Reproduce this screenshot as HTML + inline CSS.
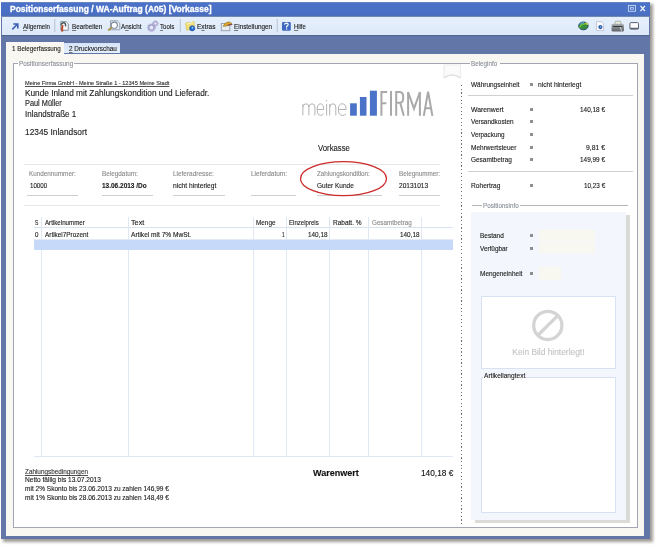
<!DOCTYPE html>
<html><head><meta charset="utf-8"><style>
html,body{margin:0;padding:0;}
body{width:658px;height:548px;position:relative;overflow:hidden;background:#fff;font-family:"Liberation Sans",sans-serif;}
.a{position:absolute;}
.t{position:absolute;white-space:nowrap;line-height:1;transform-origin:0 50%;-webkit-text-stroke:0.12px currentColor;font-family:"Liberation Sans",sans-serif;}
.hl{position:absolute;height:1px;}
u{text-decoration-color:#7a7a7a;}
.vl{position:absolute;width:1px;}
</style></head><body><div id="w" style="position:absolute;left:0;top:0;width:658px;height:548px;filter:blur(0.3px)">
<!-- shadow -->
<div class="a" style="left:3px;top:4px;width:650px;height:538px;background:rgba(80,72,64,.55);filter:blur(1.6px)"></div>
<!-- window base -->
<div class="a" style="left:1px;top:2px;width:649px;height:537px;background:#6277a8"></div>
<!-- title bar -->
<div class="a" style="left:1px;top:1.5px;width:649px;height:14.5px;background:linear-gradient(#7d90bc 0,#4a72c8 1.2px,#4a70c4 11px,#4b6cb8 100%)"></div>
<!-- toolbar -->
<div class="a" style="left:1px;top:16px;width:649px;height:1px;background:#7088b8"></div>
<div class="a" style="left:2px;top:17px;width:647px;height:18px;background:linear-gradient(#e6f0fc,#dde9f9)"></div>
<div class="a" style="left:1px;top:35px;width:649px;height:1px;background:#51648f"></div>
<!-- panel -->
<div class="a" style="left:6px;top:54px;width:638px;height:482px;background:#f8f7f1"></div>
<!-- tabs -->
<div class="a" style="left:6px;top:42px;width:58px;height:12px;background:#f8f7f1"></div>
<div class="a" style="left:64px;top:43px;width:56px;height:10px;background:linear-gradient(#d6e4f8,#e4eefb)"></div>
<!-- frame -->
<div class="a" style="left:13px;top:63px;width:623px;height:463px;border:1px solid #a2a6b2;background:#fff"></div>
<!-- gaps for labels -->
<div class="a" style="left:18px;top:62px;width:56px;height:3px;background:linear-gradient(#f8f7f1 50%,#fff 50%)"></div>
<div class="a" style="left:469.5px;top:62px;width:30px;height:3px;background:linear-gradient(#f8f7f1 50%,#fff 50%)"></div>
<!-- dotted separator -->
<div class="a" style="left:461px;top:85px;width:1px;height:442px;background:repeating-linear-gradient(#707070 0,#707070 1.2px,transparent 1.2px,transparent 3.65px)"></div>
<!-- field lines -->
<div class="hl" style="left:24px;top:164px;width:416px;background:#e6e6e6"></div>
<div class="hl" style="left:24px;top:205px;width:416px;background:#e6e6e6"></div>
<div class="hl" style="left:26.7px;top:194.7px;width:51.8px;background:#cfcfcf"></div>
<div class="hl" style="left:101.8px;top:194.7px;width:51.7px;background:#cfcfcf"></div>
<div class="hl" style="left:173.3px;top:194.7px;width:51.9px;background:#cfcfcf"></div>
<div class="hl" style="left:250.7px;top:194.7px;width:45.5px;background:#cfcfcf"></div>
<div class="hl" style="left:316.9px;top:194.7px;width:65.2px;background:#cfcfcf"></div>
<div class="hl" style="left:398.9px;top:194.7px;width:41.1px;background:#cfcfcf"></div>
<!-- table -->
<div class="hl" style="left:34px;top:227px;width:418.6px;background:#d8e2f2"></div>
<div class="hl" style="left:34px;top:239px;width:418.6px;background:#e4ebf6"></div>
<div class="hl" style="left:34px;top:456px;width:418.6px;background:#dfe6f4"></div>
<div class="vl" style="left:41px;top:217px;height:239px;background:#dfe6f4"></div>
<div class="vl" style="left:128px;top:217px;height:239px;background:#dfe6f4"></div>
<div class="vl" style="left:252.5px;top:217px;height:239px;background:#dfe6f4"></div>
<div class="vl" style="left:286px;top:217px;height:239px;background:#dfe6f4"></div>
<div class="vl" style="left:329px;top:217px;height:239px;background:#dfe6f4"></div>
<div class="vl" style="left:368px;top:217px;height:239px;background:#dfe6f4"></div>
<div class="vl" style="left:420.5px;top:217px;height:239px;background:#dfe6f4"></div>
<div class="a" style="left:34px;top:240px;width:418.6px;height:10.4px;background:#c6d9f8"></div>
<!-- ellipse -->
<svg class="a" style="left:0;top:0" width="658" height="548"><ellipse cx="343.5" cy="178.7" rx="43" ry="17" fill="none" stroke="#cc2a2a" stroke-width="1.3"/></svg>
<!-- beleginfo lines -->
<div class="hl" style="left:468px;top:95px;width:165px;background:#d0d0d0"></div>
<div class="hl" style="left:468px;top:171px;width:165px;background:#d0d0d0"></div>
<!-- positionsinfo -->
<div class="hl" style="left:472px;top:205px;width:10px;background:#b4b4b0"></div>
<div class="hl" style="left:519.5px;top:205px;width:108px;background:#b4b4b0"></div>
<div class="a" style="left:471px;top:212px;width:155px;height:308px;background:#f3f6fc;box-shadow:4px 3px 0 #dadad6"></div>
<div class="a" style="left:539px;top:229.5px;width:56px;height:11px;background:#f9f8f0"></div>
<div class="a" style="left:539px;top:241.5px;width:56px;height:11px;background:#f9f8f0"></div>
<div class="a" style="left:539px;top:267px;width:22px;height:13px;background:#f9f8f0"></div>
<div class="a" style="left:481px;top:295.5px;width:132.5px;height:71.5px;border:1px solid #d9e2f3;background:#fff"></div>
<svg class="a" style="left:0;top:0" width="658" height="548"><circle cx="547.8" cy="325.4" r="14.1" fill="none" stroke="#d4d4d4" stroke-width="3.3"/><line x1="557.9" y1="315.3" x2="537.7" y2="335.5" stroke="#d4d4d4" stroke-width="3.3"/></svg>
<div class="a" style="left:481px;top:377px;width:132.5px;height:134px;border:1px solid #d9e2f3;background:#fff"></div>
<!-- logo -->
<svg class="a" style="left:0;top:0" width="658" height="548">
<g fill="none" stroke="#b3b3b3" stroke-width="1">
<path d="M302.9,115.4 V104 M302.9,107 Q303.5,103.8 306,103.8 Q308.9,103.8 308.9,107 V115.4 M308.9,107 Q309.5,103.8 312,103.8 Q314.9,103.8 314.9,107 V115.4"/>
<path d="M317.2,109.5 H323.7 Q323.7,103.8 320.4,103.8 Q317.2,103.8 317.2,109.6 Q317.2,115.4 320.6,115.4 Q322.7,115.4 323.7,113.6"/>
<path d="M326.6,104 V115.4 M326.6,100 V101.3"/>
<path d="M329.7,115.4 V104 M329.7,107 Q330.4,103.8 332.9,103.8 Q335.8,103.8 335.8,107 V115.4"/>
<path d="M338.4,109.5 H346.1 Q346.1,103.8 342.2,103.8 Q338.4,103.8 338.4,109.6 Q338.4,115.4 342.4,115.4 Q344.9,115.4 346.1,113.6"/>
</g>
<rect x="350.1" y="103.3" width="6.7" height="12.4" fill="#4a72c8"/>
<rect x="359.9" y="97" width="6.6" height="18.7" fill="#4a72c8"/>
<rect x="369.9" y="90.7" width="7" height="25" fill="#4a72c8"/>
<g fill="none" stroke="#a9a9a9" stroke-width="2">
<path d="M381.4,115.8 V92.1 H387.2 M381.4,103.3 H386.3"/>
<path d="M391,91.1 V115.8"/>
<path d="M396.2,115.8 V92.1 H399.8 Q403.2,92.1 403.2,97.4 Q403.2,102.8 399.8,102.8 H396.2 M400.2,102.8 L403.8,115.8"/>
<path d="M408.1,115.8 V92 L414,108.7 L419.9,92 V115.8"/>
<path d="M423.8,115.8 L428.1,91.6 L432.4,115.8 M425.1,108.2 H431.1"/>
</g>
</svg>
<!-- equal signs -->
<div class="a" style="left:530px;top:83px;width:3px;height:3px;background:#8e8e8e"></div>
<div class="a" style="left:530px;top:108px;width:3px;height:3px;background:#8e8e8e"></div>
<div class="a" style="left:530px;top:120px;width:3px;height:3px;background:#8e8e8e"></div>
<div class="a" style="left:530px;top:133px;width:3px;height:3px;background:#8e8e8e"></div>
<div class="a" style="left:530px;top:146px;width:3px;height:3px;background:#8e8e8e"></div>
<div class="a" style="left:530px;top:158px;width:3px;height:3px;background:#8e8e8e"></div>
<div class="a" style="left:530px;top:184px;width:3px;height:3px;background:#8e8e8e"></div>
<div class="a" style="left:530px;top:234px;width:3px;height:3px;background:#8e8e8e"></div>
<div class="a" style="left:530px;top:247px;width:3px;height:3px;background:#8e8e8e"></div>
<div class="a" style="left:530px;top:272px;width:3px;height:3px;background:#8e8e8e"></div>
<!-- page curl -->
<svg class="a" style="left:0;top:0" width="658" height="548">
<path d="M444,65 H460.5 V78 Q452,72 444,78 Z" fill="#fbfbfb" stroke="#ededed" stroke-width="1.2"/><path d="M444.5,77.5 Q452,72.5 460,77.5" fill="none" stroke="#e2e2e2" stroke-width="1.6"/>
</svg>
<!-- toolbar icons -->
<svg class="a" style="left:0;top:0" width="658" height="548">
<!-- separators -->
<rect x="54.3" y="19" width="1" height="13" fill="#b8c0cc"/>
<rect x="179.8" y="19" width="1" height="13" fill="#b8c0cc"/>
<rect x="276.7" y="19" width="1" height="13" fill="#b8c0cc"/>
<!-- allgemein arrow -->
<path d="M12.3,29.4 L17.4,24.3 M13.3,24 H17.8 V28.5" fill="none" stroke="#3a5fb4" stroke-width="1.6"/>
<!-- bearbeiten -->
<path d="M60.8,21.6 H66 L68.3,23.8 V30.3 H60.8 Z" fill="#f4f6fa" stroke="#7d8898" stroke-width="0.9"/>
<path d="M62.3,31.6 Q61.9,27 62.6,25" fill="none" stroke="#b84a2a" stroke-width="2"/>
<path d="M60.8,24.8 Q62,22.6 64,22.8 Q65.8,23.2 65.6,26.4" fill="none" stroke="#4a5c5c" stroke-width="1.4"/>
<!-- ansicht -->
<path d="M110.5,20.8 H117.2 L119.8,23.3 V29.8 H110.5 Z" fill="#e8ecf4" stroke="#8f9aac" stroke-width="0.9"/>
<circle cx="114.3" cy="25.2" r="3.1" fill="#ffffff" stroke="#7f8a9e" stroke-width="1.1"/>
<path d="M108.2,30.5 L111.8,27.3" stroke="#a89850" stroke-width="2"/>
<!-- tools -->
<circle cx="151.4" cy="27.6" r="3.6" fill="none" stroke="#9c96c4" stroke-width="1.2" stroke-dasharray="1.2 0.9"/>
<circle cx="151.4" cy="27.6" r="2.6" fill="none" stroke="#a8a2cc" stroke-width="1.4"/>
<circle cx="155.4" cy="23.5" r="2.7" fill="none" stroke="#9c96c4" stroke-width="1" stroke-dasharray="1 0.8"/>
<circle cx="155.4" cy="23.5" r="1.9" fill="#e4e0f2" stroke="#aaa4ce" stroke-width="1.1"/>
<!-- extras -->
<path d="M185.5,23.5 L188,22.3 L191,22.6 L194,21.3 L194.6,28.8 L186.6,30.2 Z" fill="#f0de78" stroke="#d8be50" stroke-width="0.6"/><path d="M187,24 L193,22.5" stroke="#fff8d0" stroke-width="1"/>
<circle cx="192.2" cy="28.3" r="2.6" fill="#2a6ccc" stroke="#1a4a9a" stroke-width="0.6"/>
<circle cx="192.5" cy="27.8" r="0.8" fill="#bfe8ff"/>
<!-- einstellungen -->
<rect x="221.3" y="23.5" width="8.5" height="7.2" fill="#e8ecf2" stroke="#9aa3b0" stroke-width="1"/>
<path d="M223,26.2 Q225,22 229,21.8 L232,23.5 Q228,25.5 226,26.2 Z" fill="#d8a830" stroke="#8a6a20" stroke-width="0.5"/>
<path d="M227.5,25.2 L232.3,24.5" stroke="#803040" stroke-width="1"/>
<!-- hilfe -->
<rect x="282" y="21.9" width="8.8" height="8.8" rx="1.3" fill="#3f6ac0"/>
<path d="M284.6,24.6 Q284.8,23.1 286.4,23.1 Q288.2,23.1 288.2,24.6 Q288.2,25.7 286.6,26.4 V27.6" fill="none" stroke="#fff" stroke-width="1.2"/>
<rect x="286" y="28.3" width="1.2" height="1.2" fill="#fff"/>
<!-- right icons -->
<ellipse cx="583.4" cy="25.9" rx="4.7" ry="3.9" fill="#3a8a40" stroke="#1e4a6a" stroke-width="1"/>
<path d="M579.5,27.5 Q582,23 587.5,24" fill="none" stroke="#6ac030" stroke-width="1.6"/>
<path d="M580,24.5 Q581.5,22.8 584,22.7" fill="none" stroke="#5aa0d0" stroke-width="1.2"/>
<path d="M585.3,23.3 Q587,23.3 587.8,24.6" fill="none" stroke="#e0d040" stroke-width="1.2"/>
<path d="M596.4,21.6 H601.8 L603.6,23.5 V30.6 H596.4 Z" fill="#fafbfd" stroke="#b0b4c8" stroke-width="0.7"/>
<circle cx="600.4" cy="27.1" r="2.1" fill="#2c5ea8"/>
<circle cx="600.7" cy="26.8" r="0.6" fill="#cfe6ff"/>
<path d="M614.5,24.2 L615.5,21.3 H620.5 L621.5,24.2 Z" fill="#e8f0e0" stroke="#8a8a8a" stroke-width="0.6"/>
<defs><linearGradient id="pg" x1="0" y1="0" x2="0" y2="1"><stop offset="0" stop-color="#a8acb0"/><stop offset="1" stop-color="#5e6266"/></linearGradient></defs><path d="M611.5,25 Q611.5,24 613,24 H622.5 Q624,24 624,25.5 V30 Q624,31.5 622.5,31.5 H613 Q611.5,31.5 611.5,30 Z" fill="url(#pg)"/>
<path d="M613,26.5 H622.5" stroke="#35383a" stroke-width="1"/>
<path d="M620.3,27 L621.5,31" stroke="#d8d8d8" stroke-width="0.9"/>
<rect x="629.9" y="22.6" width="8.6" height="6.5" rx="1" fill="#fbfbfc" stroke="#5d6270" stroke-width="1"/>
<path d="M630,28.4 H638.4" stroke="#5d6270" stroke-width="1.3"/>
<!-- window buttons -->
<rect x="628.4" y="5.5" width="7.1" height="5.8" fill="none" stroke="#c8d8f4" stroke-width="0.9"/>
<rect x="630.6" y="7.6" width="2.8" height="1.6" fill="none" stroke="#c8d8f4" stroke-width="0.8"/>
<path d="M640.5,5.8 L645,11.2 M645,5.8 L640.5,11.2" stroke="#f4f8ff" stroke-width="1.3"/>
</svg>
<div class="a" style="left:483px;top:375px;width:42px;height:3px;background:linear-gradient(#f3f6fc 1px,#fff 1px)"></div>
<div class="t" style="left:10.00px;top:5px;font-size:8.4px;font-weight:bold;color:#ffffff;transform:scaleX(1.0148);-webkit-text-stroke:0.3px #fff;">Positionserfassung / WA-Auftrag (A05) [Vorkasse]</div>
<div class="t" style="left:22.80px;top:24px;font-size:7.1px;font-weight:normal;color:#1a1a1a;transform:scaleX(0.8653);"><u>A</u>llgemein</div>
<div class="t" style="left:71.90px;top:24px;font-size:7.1px;font-weight:normal;color:#1a1a1a;transform:scaleX(0.8846);"><u>B</u>earbeiten</div>
<div class="t" style="left:121.40px;top:24px;font-size:7.1px;font-weight:normal;color:#1a1a1a;transform:scaleX(0.8759);">A<u>n</u>sicht</div>
<div class="t" style="left:160.20px;top:24px;font-size:7.1px;font-weight:normal;color:#1a1a1a;transform:scaleX(0.8641);"><u>T</u>ools</div>
<div class="t" style="left:197.00px;top:24px;font-size:7.1px;font-weight:normal;color:#1a1a1a;transform:scaleX(0.9194);">E<u>x</u>tras</div>
<div class="t" style="left:233.80px;top:24px;font-size:7.1px;font-weight:normal;color:#1a1a1a;transform:scaleX(0.8933);"><u>E</u>instellungen</div>
<div class="t" style="left:294.20px;top:24px;font-size:7.1px;font-weight:normal;color:#1a1a1a;transform:scaleX(0.8283);"><u>H</u>ilfe</div>
<div class="t" style="left:11.90px;top:46px;font-size:7.1px;font-weight:normal;color:#1a1a1a;transform:scaleX(0.8830);">1 Belegerfassung</div>
<div class="t" style="left:68.90px;top:46px;font-size:7.1px;font-weight:normal;color:#1a1a1a;transform:scaleX(0.8972);"><u>2</u> Druckvorschau</div>
<div class="t" style="left:18.80px;top:61px;font-size:7.1px;font-weight:normal;color:#8a8f98;transform:scaleX(0.9051);">Positionserfassung</div>
<div class="t" style="left:471.20px;top:61px;font-size:7.1px;font-weight:normal;color:#8a8f98;transform:scaleX(0.8875);">Beleginfo</div>
<div class="t" style="left:483.00px;top:203px;font-size:7.1px;font-weight:normal;color:#8a8f98;transform:scaleX(0.8864);">Positionsinfo</div>
<div class="t" style="left:25.00px;top:81px;font-size:5.3px;font-weight:normal;color:#333;transform:scaleX(1.0590);text-decoration:underline;text-decoration-color:#505050;">Meine Firma GmbH - Meine Straße 1 - 12345 Meine Stadt</div>
<div class="t" style="left:25.00px;top:89px;font-size:8.7px;font-weight:normal;color:#1a1a1a;transform:scaleX(0.9521);">Kunde Inland mit Zahlungskondition und Lieferadr.</div>
<div class="t" style="left:24.90px;top:99px;font-size:8.7px;font-weight:normal;color:#1a1a1a;transform:scaleX(0.8471);">Paul Müller</div>
<div class="t" style="left:24.90px;top:110px;font-size:8.7px;font-weight:normal;color:#1a1a1a;transform:scaleX(0.9209);">Inlandstraße 1</div>
<div class="t" style="left:24.90px;top:128px;font-size:8.7px;font-weight:normal;color:#1a1a1a;transform:scaleX(0.9585);">12345 Inlandsort</div>
<div class="t" style="left:318.20px;top:144px;font-size:9.0px;font-weight:normal;color:#1a1a1a;transform:scaleX(0.8618);">Vorkasse</div>
<div class="t" style="left:29.20px;top:171px;font-size:7.1px;font-weight:normal;color:#8a8a8a;transform:scaleX(0.8919);">Kundennummer:</div>
<div class="t" style="left:30.40px;top:183px;font-size:7.1px;font-weight:normal;color:#1a1a1a;transform:scaleX(0.8695);">10000</div>
<div class="t" style="left:101.80px;top:171px;font-size:7.1px;font-weight:normal;color:#8a8a8a;transform:scaleX(0.8982);">Belegdatum:</div>
<div class="t" style="left:101.80px;top:183px;font-size:7.1px;font-weight:bold;color:#1a1a1a;transform:scaleX(0.9139);">13.06.2013 /Do</div>
<div class="t" style="left:173.30px;top:171px;font-size:7.1px;font-weight:normal;color:#8a8a8a;transform:scaleX(0.9070);">Lieferadresse:</div>
<div class="t" style="left:173.30px;top:183px;font-size:7.1px;font-weight:normal;color:#1a1a1a;transform:scaleX(0.9401);">nicht hinterlegt</div>
<div class="t" style="left:250.70px;top:171px;font-size:7.1px;font-weight:normal;color:#8a8a8a;transform:scaleX(0.9148);">Lieferdatum:</div>
<div class="t" style="left:316.90px;top:171px;font-size:7.1px;font-weight:normal;color:#8a8a8a;transform:scaleX(0.8879);">Zahlungskondition:</div>
<div class="t" style="left:316.90px;top:183px;font-size:7.1px;font-weight:normal;color:#1a1a1a;transform:scaleX(0.9136);">Guter Kunde</div>
<div class="t" style="left:398.90px;top:171px;font-size:7.1px;font-weight:normal;color:#8a8a8a;transform:scaleX(0.8904);">Belegnummer:</div>
<div class="t" style="left:398.90px;top:183px;font-size:7.1px;font-weight:normal;color:#1a1a1a;transform:scaleX(0.9204);">20131013</div>
<div class="t" style="left:35.10px;top:220px;font-size:7.1px;font-weight:normal;color:#1a1a1a;transform:scaleX(0.7000);">S</div>
<div class="t" style="left:45.20px;top:220px;font-size:7.1px;font-weight:normal;color:#1a1a1a;transform:scaleX(0.8692);">Artikelnummer</div>
<div class="t" style="left:131.00px;top:220px;font-size:7.1px;font-weight:normal;color:#1a1a1a;transform:scaleX(1.0201);">Text</div>
<div class="t" style="left:256.00px;top:220px;font-size:7.1px;font-weight:normal;color:#1a1a1a;transform:scaleX(0.8968);">Menge</div>
<div class="t" style="left:289.40px;top:220px;font-size:7.1px;font-weight:normal;color:#1a1a1a;transform:scaleX(0.8563);">Einzelpreis</div>
<div class="t" style="left:332.80px;top:220px;font-size:7.1px;font-weight:normal;color:#1a1a1a;transform:scaleX(0.9170);">Rabatt. %</div>
<div class="t" style="left:372.20px;top:220px;font-size:7.1px;font-weight:normal;color:#8a8a8a;transform:scaleX(0.8844);">Gesamtbetrag</div>
<div class="t" style="left:35.10px;top:232px;font-size:7.1px;font-weight:normal;color:#1a1a1a;transform:scaleX(0.8750);">0</div>
<div class="t" style="left:45.20px;top:232px;font-size:7.1px;font-weight:normal;color:#1a1a1a;transform:scaleX(0.8996);">Artikel7Prozent</div>
<div class="t" style="left:131.00px;top:232px;font-size:7.1px;font-weight:normal;color:#1a1a1a;transform:scaleX(0.9252);">Artikel mit 7% MwSt.</div>
<div class="t" style="left:281.50px;top:232px;font-size:7.1px;font-weight:normal;color:#1a1a1a;transform:scaleX(0.6750);">1</div>
<div class="t" style="left:307.50px;top:232px;font-size:7.1px;font-weight:normal;color:#1a1a1a;transform:scaleX(0.8965);">140,18</div>
<div class="t" style="left:399.50px;top:232px;font-size:7.1px;font-weight:normal;color:#1a1a1a;transform:scaleX(0.8965);">140,18</div>
<div class="t" style="left:24.60px;top:469px;font-size:7.1px;font-weight:normal;color:#333;transform:scaleX(0.8966);text-decoration:underline;text-decoration-color:#505050;">Zahlungsbedingungen</div>
<div class="t" style="left:24.60px;top:477px;font-size:7.1px;font-weight:normal;color:#1a1a1a;transform:scaleX(0.9247);">Netto fällig bis 13.07.2013</div>
<div class="t" style="left:24.60px;top:486px;font-size:7.1px;font-weight:normal;color:#1a1a1a;transform:scaleX(0.9211);">mit 2% Skonto bis 23.06.2013 zu zahlen 146,99 €</div>
<div class="t" style="left:24.60px;top:495px;font-size:7.1px;font-weight:normal;color:#1a1a1a;transform:scaleX(0.9211);">mit 1% Skonto bis 28.06.2013 zu zahlen 148,49 €</div>
<div class="t" style="left:312.90px;top:469px;font-size:8.4px;font-weight:bold;color:#111;transform:scaleX(1.0769);">Warenwert</div>
<div class="t" style="left:421.00px;top:469px;font-size:8.4px;font-weight:normal;color:#111;transform:scaleX(0.9926);">140,18 €</div>
<div class="t" style="left:470.80px;top:82px;font-size:7.1px;font-weight:normal;color:#1a1a1a;transform:scaleX(0.9106);">Währungseinheit</div>
<div class="t" style="left:470.80px;top:107px;font-size:7.1px;font-weight:normal;color:#1a1a1a;transform:scaleX(0.9630);">Warenwert</div>
<div class="t" style="left:579.60px;top:107px;font-size:7.1px;font-weight:normal;color:#1a1a1a;transform:scaleX(0.9072);">140,18 €</div>
<div class="t" style="left:470.80px;top:119px;font-size:7.1px;font-weight:normal;color:#1a1a1a;transform:scaleX(0.9067);">Versandkosten</div>
<div class="t" style="left:470.80px;top:132px;font-size:7.1px;font-weight:normal;color:#1a1a1a;transform:scaleX(0.8955);">Verpackung</div>
<div class="t" style="left:470.80px;top:145px;font-size:7.1px;font-weight:normal;color:#1a1a1a;transform:scaleX(0.9195);">Mehrwertsteuer</div>
<div class="t" style="left:585.70px;top:145px;font-size:7.1px;font-weight:normal;color:#1a1a1a;transform:scaleX(0.9607);">9,81 €</div>
<div class="t" style="left:470.80px;top:157px;font-size:7.1px;font-weight:normal;color:#1a1a1a;transform:scaleX(0.9110);">Gesamtbetrag</div>
<div class="t" style="left:579.60px;top:157px;font-size:7.1px;font-weight:normal;color:#1a1a1a;transform:scaleX(0.9072);">149,99 €</div>
<div class="t" style="left:470.80px;top:183px;font-size:7.1px;font-weight:normal;color:#1a1a1a;transform:scaleX(0.9336);">Rohertrag</div>
<div class="t" style="left:583.50px;top:183px;font-size:7.1px;font-weight:normal;color:#1a1a1a;transform:scaleX(0.8937);">10,23 €</div>
<div class="t" style="left:538.00px;top:82px;font-size:7.1px;font-weight:normal;color:#1a1a1a;transform:scaleX(0.9379);">nicht hinterlegt</div>
<div class="t" style="left:480.20px;top:233px;font-size:7.1px;font-weight:normal;color:#1a1a1a;transform:scaleX(0.9124);">Bestand</div>
<div class="t" style="left:480.20px;top:246px;font-size:7.1px;font-weight:normal;color:#1a1a1a;transform:scaleX(0.9013);">Verfügbar</div>
<div class="t" style="left:480.20px;top:271px;font-size:7.1px;font-weight:normal;color:#1a1a1a;transform:scaleX(0.9105);">Mengeneinheit</div>
<div class="t" style="left:512.30px;top:348px;font-size:8.4px;font-weight:normal;color:#c4c4c4;">Kein Bild hinterlegt!</div>
<div class="t" style="left:483.70px;top:373px;font-size:7.1px;font-weight:normal;color:#1a1a1a;transform:scaleX(0.9264);">Artikellangtext</div>
</div></body></html>
